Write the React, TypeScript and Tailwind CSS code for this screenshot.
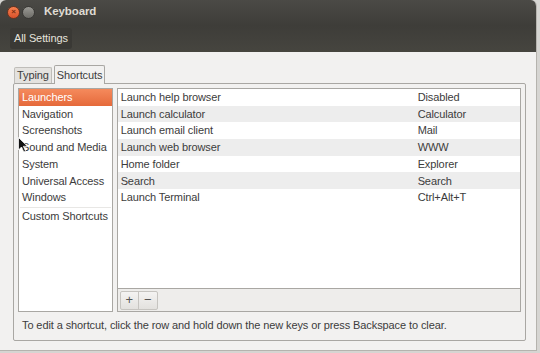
const CATEGORIES = [
  "Launchers",
  "Navigation",
  "Screenshots",
  "Sound and Media",
  "System",
  "Universal Access",
  "Windows",
];

const SHORTCUTS = [
  { action: "Launch help browser", key: "Disabled" },
  { action: "Launch calculator", key: "Calculator" },
  { action: "Launch email client", key: "Mail" },
  { action: "Launch web browser", key: "WWW" },
  { action: "Home folder", key: "Explorer" },
  { action: "Search", key: "Search" },
  { action: "Launch Terminal", key: "Ctrl+Alt+T" },
];

export default function App() {
  return (
    <div className="relative w-[540px] h-[353px] overflow-hidden bg-[#d6d5d2] font-['Liberation_Sans',sans-serif] text-[11px] tracking-[-0.1px] text-[#3c3c3c] whitespace-nowrap">
      <div className="w-[537px] h-[351px] flex flex-col rounded-tr-[6px] rounded-tl-[6px] overflow-hidden border-r border-b border-[#b5b3ae] bg-[#f2f1f0]">
        {/* Title bar + toolbar */}
        <div className="bg-gradient-to-b from-[#4b4a46] via-[#3e3d39] to-[#46453f]">
          <div className="h-[24px] flex items-center pl-[7px] gap-[2px]">
            <span className="w-[13px] h-[13px] rounded-full bg-gradient-to-b from-[#f7804f] to-[#d9512a] border border-[#6b3420] flex items-center justify-center text-[8px] leading-none text-[#7a2e12] font-bold">
              ×
            </span>
            <span className="w-[13px] h-[13px] rounded-full bg-gradient-to-b from-[#9b9a95] to-[#6d6c67] border border-[#3a3936]" />
            <span className="ml-[7px] text-[11.5px] font-bold text-[#dfdbd2]">Keyboard</span>
          </div>
          <div className="h-[28px] flex items-center pl-[10px]">
            <div className="h-[21px] px-[4px] flex items-center rounded-[3px] bg-[#3a3935] text-[#e6e3dc]">
              All Settings
            </div>
          </div>
        </div>

        {/* Content */}
        <div className="flex-1 flex flex-col pl-[13px] pr-[10px] pt-[13px]">
          {/* Tabs */}
          <div className="flex items-end h-[18px] pl-[1px] gap-[2px]">
            <div className="h-[16px] px-[2px] flex items-center border border-b-0 border-[#bfbdb9] bg-[#e4e2df] rounded-t-[2px]">
              Typing
            </div>
            <div className="h-[19px] px-[2px] flex items-center border border-b-0 border-[#a9a7a3] bg-[#f2f1f0] rounded-t-[2px] -mb-[1px] relative z-10">
              Shortcuts
            </div>
          </div>

          {/* Notebook frame */}
          <div className="border border-[#a9a7a3] rounded-[2px] h-[258px] flex flex-col">
            <div className="flex gap-[4px] p-[4px]">
              {/* Category list */}
              <div className="w-[95px] h-[224px] border border-[#a9a7a3] bg-white">
                {CATEGORIES.map((c, i) => (
                  <div
                    key={c}
                    className={
                      i === 0
                        ? "h-[16.7px] pl-[3px] flex items-center text-white bg-gradient-to-b from-[#f58a5c] to-[#e5693a]"
                        : "h-[16.7px] pl-[3px] flex items-center"
                    }
                  >
                    {c}
                  </div>
                ))}
                <div className="mt-[1px] mx-[1px] border-t border-[#e8e7e5]" />
                <div className="h-[16.7px] pl-[3px] flex items-center">Custom Shortcuts</div>
              </div>

              {/* Shortcut tree */}
              <div className="w-[406px] flex flex-col">
                <div className="h-[201px] border border-[#a9a7a3] bg-white">
                  {SHORTCUTS.map((s, i) => (
                    <div
                      key={s.action}
                      className={
                        i % 2 === 1
                          ? "h-[16.7px] flex items-center bg-[#ededed]"
                          : "h-[16.7px] flex items-center"
                      }
                    >
                      <span className="w-[300px] pl-[3px]">{s.action}</span>
                      <span>{s.key}</span>
                    </div>
                  ))}
                </div>
                <div className="h-[23px] border border-t-0 border-[#a9a7a3] bg-[#eeedeb] flex items-center pl-[2px]">
                  <div className="flex h-[19px] border border-[#c6c4c0] rounded-[2px] bg-gradient-to-b from-[#f4f3f2] to-[#e3e1de]">
                    <span className="w-[18px] flex items-center justify-center text-[13px] text-[#555] border-r border-[#c6c4c0]">
                      +
                    </span>
                    <span className="w-[18px] flex items-center justify-center text-[13px] text-[#555]">−</span>
                  </div>
                </div>
              </div>
            </div>
            <div className="pl-[8px] pt-[1px]">
              To edit a shortcut, click the row and hold down the new keys or press Backspace to clear.
            </div>
          </div>
        </div>
      </div>

      {/* Mouse pointer */}
      <svg className="absolute left-[18px] top-[137px]" width="10" height="16" viewBox="0 0 10 16">
        <path d="M0.5 0.5 L0.5 13 L3.5 10 L5.8 15 L7.6 14.2 L5.4 9.3 L9.5 9.3 Z" fill="#111" stroke="#fff" strokeWidth="0.8" />
      </svg>
    </div>
  );
}
